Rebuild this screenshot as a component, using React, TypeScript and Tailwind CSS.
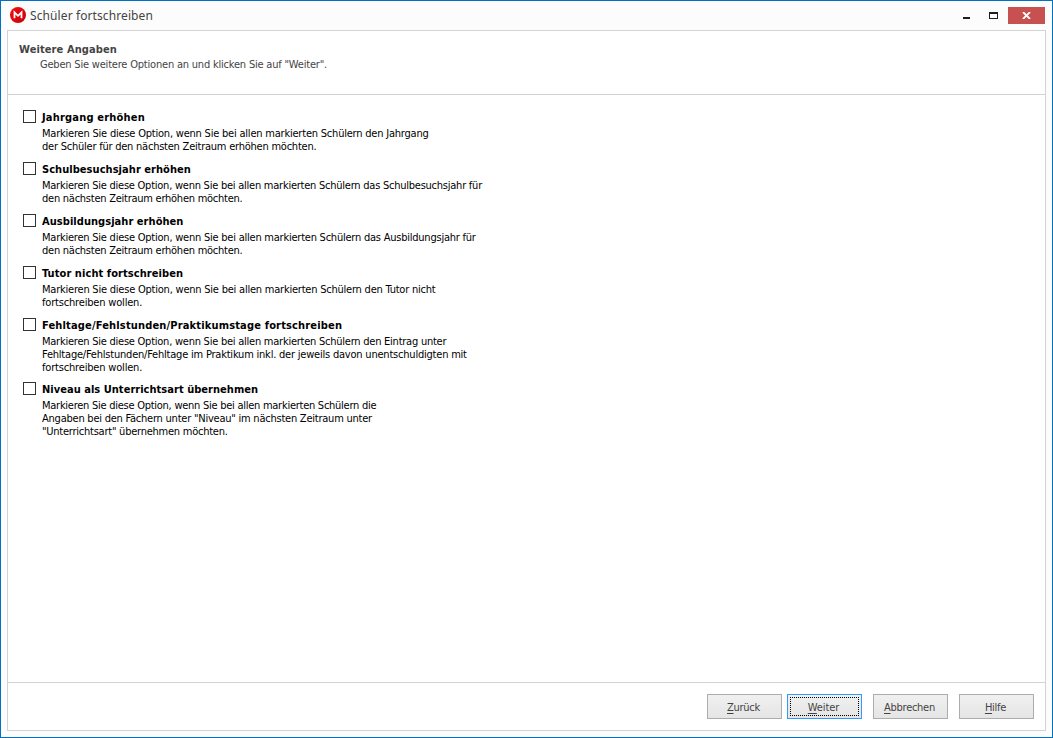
import { clsx } from 'clsx'

type Option = {
  title: string
  titleClass: string
  lines: Array<[string, string]>
}

const options: Option[] = [
  {
    title: 'Jahrgang erhöhen',
    titleClass: 'tracking-[0.19px]',
    lines: [
      ['Markieren Sie diese Option, wenn Sie bei allen markierten Schülern den Jahrgang', 'tracking-[-0.21px]'],
      ['der Schüler für den nächsten Zeitraum erhöhen möchten.', 'tracking-[-0.23px]'],
    ],
  },
  {
    title: 'Schulbesuchsjahr erhöhen',
    titleClass: 'tracking-[0.05px]',
    lines: [
      ['Markieren Sie diese Option, wenn Sie bei allen markierten Schülern das Schulbesuchsjahr für', 'tracking-[-0.24px]'],
      ['den nächsten Zeitraum erhöhen möchten.', 'tracking-[-0.25px]'],
    ],
  },
  {
    title: 'Ausbildungsjahr erhöhen',
    titleClass: 'tracking-[0.05px]',
    lines: [
      ['Markieren Sie diese Option, wenn Sie bei allen markierten Schülern das Ausbildungsjahr für', 'tracking-[-0.23px]'],
      ['den nächsten Zeitraum erhöhen möchten.', 'tracking-[-0.25px]'],
    ],
  },
  {
    title: 'Tutor nicht fortschreiben',
    titleClass: 'tracking-[0.07px]',
    lines: [
      ['Markieren Sie diese Option, wenn Sie bei allen markierten Schülern den Tutor nicht', 'tracking-[-0.22px]'],
      ['fortschreiben wollen.', 'tracking-[-0.18px]'],
    ],
  },
  {
    title: 'Fehltage/Fehlstunden/Praktikumstage fortschreiben',
    titleClass: 'tracking-[0.16px]',
    lines: [
      ['Markieren Sie diese Option, wenn Sie bei allen markierten Schülern den Eintrag unter', 'tracking-[-0.24px]'],
      ['Fehltage/Fehlstunden/Fehltage im Praktikum inkl. der jeweils davon unentschuldigten mit', 'tracking-[-0.21px]'],
      ['fortschreiben wollen.', 'tracking-[-0.18px]'],
    ],
  },
  {
    title: 'Niveau als Unterrichtsart übernehmen',
    titleClass: 'tracking-[0.03px]',
    lines: [
      ['Markieren Sie diese Option, wenn Sie bei allen markierten Schülern die', 'tracking-[-0.26px]'],
      ['Angaben bei den Fächern unter "Niveau" im nächsten Zeitraum unter', 'tracking-[-0.23px]'],
      ['"Unterrichtsart" übernehmen möchten.', 'tracking-[-0.24px]'],
    ],
  },
]

function TitleBar() {
  return (
    <header className="flex h-[29px] shrink-0 items-start pl-[9px] pr-[7px]">
      <svg className="mt-[6px] shrink-0" width="16" height="16" viewBox="0 0 16 16">
        <defs>
          <linearGradient id="logo" x1="0" y1="0" x2="1" y2="1">
            <stop offset="0" stopColor="#f40d12" />
            <stop offset="1" stopColor="#c8000a" />
          </linearGradient>
        </defs>
        <circle cx="8" cy="8" r="8" fill="url(#logo)" />
        <path d="M4.5 11.2V5.4L8 8.8l3.5-3.4v5.8" fill="none" stroke="#fff" strokeWidth="1.8" />
      </svg>
      <h1 className="ml-1 mt-[6px] font-['Noto_Sans'] text-[12px] leading-[18px] tracking-[0.1px] text-[#444]">
        Schüler fortschreiben
      </h1>
      <div className="ml-auto flex items-start">
        <button aria-label="Minimieren" className="mt-[6px] flex h-[17px] w-[27px]">
          <span className="ml-[7px] mt-[10px] h-[2px] w-[7px] bg-[#1e1e1e]" />
        </button>
        <button aria-label="Maximieren" className="mt-[6px] flex h-[17px] w-[25px]">
          <span className="ml-[6px] mt-[5px] h-[7px] w-[9px] border border-t-2 border-[#1e1e1e]" />
        </button>
        <button aria-label="Schließen" className="mt-[6px] flex h-[17px] w-[37px] items-center justify-center bg-[#c75050]">
          <svg width="9" height="7" viewBox="0 0 9 7">
            <path d="M1 0l7 7M8 0L1 7" stroke="#fff" strokeWidth="1.8" />
          </svg>
        </button>
      </div>
    </header>
  )
}

function OptionRow({ option }: { option: Option }) {
  return (
    <label className="flex items-start">
      <input
        type="checkbox"
        className="size-[13px] shrink-0 appearance-none border border-[#333] bg-white"
      />
      <span className="ml-[6px] block whitespace-nowrap pt-px text-black">
        <strong className={clsx('block leading-[13px]', option.titleClass)}>{option.title}</strong>
        <span className="mt-[3px] block">
          {option.lines.map(([text, tracking]) => (
            <span key={text} className={clsx('block leading-[13px]', tracking)}>
              {text}
            </span>
          ))}
        </span>
      </span>
    </label>
  )
}

function WizardButton({ label, className, focused = false }: { label: string; className?: string; focused?: boolean }) {
  return (
    <button
      className={clsx(
        'h-[25px] w-[75px] border bg-gradient-to-b from-[#f0f0f0] to-[#e5e5e5] p-[2px] text-[#444]',
        focused ? 'border-[#3399ff] tracking-[-0.1px]' : 'border-[#acacac] tracking-[-0.27px]',
        className,
      )}
    >
      <span
        className={clsx(
          'flex h-full items-center justify-center border border-dotted pr-[2px] pt-[2px]',
          focused ? 'border-black' : 'border-transparent',
        )}
      >
        <span className="leading-[13px]">
          <span className="underline underline-offset-[2px]">{label[0]}</span>
          {label.slice(1)}
        </span>
      </span>
    </button>
  )
}

export default function App() {
  return (
    <div className="flex h-[738px] w-[1053px] flex-col border border-[#0072c6] bg-[#fcfcfc] font-['DejaVu_Sans_Condensed','DejaVu_Sans',sans-serif] text-[11px] [font-stretch:condensed]">
      <TitleBar />
      <main className="mx-[6px] mb-[6px] flex flex-1 flex-col border border-[#d3d3d3] bg-white">
        <div className="h-[64px] border-b border-[#d3d3d3] pl-[11px] pt-[11px] text-[#444]">
          <h2 className="font-bold leading-[15px] tracking-[0.1px]">Weitere Angaben</h2>
          <p className="pl-[21px] leading-[15px] tracking-[-0.2px]">
            Geben Sie weitere Optionen an und klicken Sie auf "Weiter".
          </p>
        </div>
        <div className="flex flex-1 flex-col gap-[9px] pl-[15px] pt-[15px]">
          {options.map((option) => (
            <div key={option.title} className={option.lines.length === 2 ? 'h-[43px]' : 'h-[55px]'}>
              <OptionRow option={option} />
            </div>
          ))}
        </div>
        <footer className="flex h-[48px] justify-end border-t border-[#d3d3d3] pr-[11px] pt-[11px]">
          <WizardButton label="Zurück" />
          <WizardButton label="Weiter" className="ml-[5px]" focused />
          <WizardButton label="Abbrechen" className="ml-[11px]" />
          <WizardButton label="Hilfe" className="ml-[11px]" />
        </footer>
      </main>
    </div>
  )
}
